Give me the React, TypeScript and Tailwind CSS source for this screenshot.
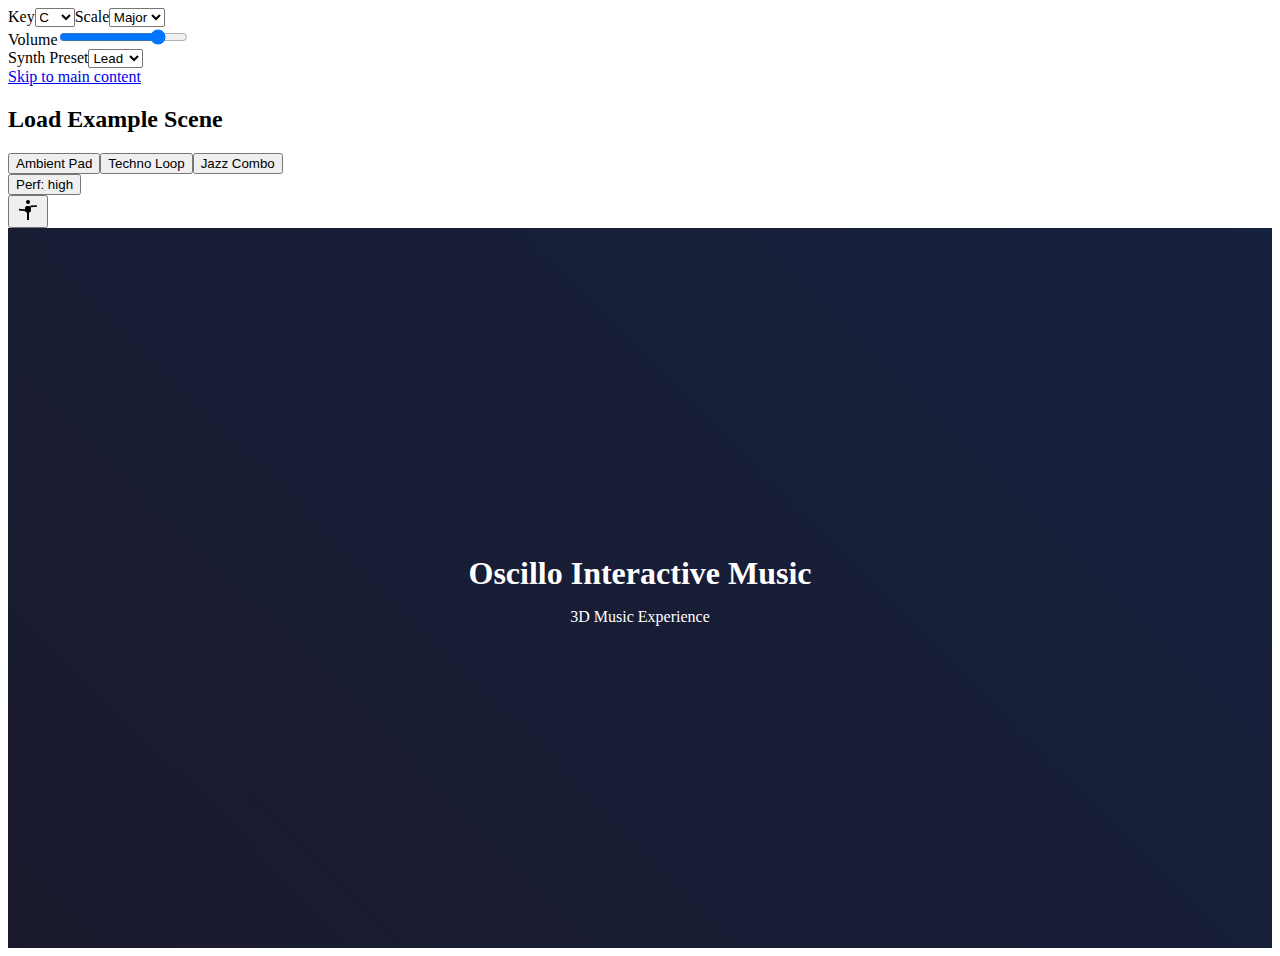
import React from "react";

const selectClass =
  "appearance-auto h-[19px] rounded-[2px] border border-[#767676] bg-white font-['Liberation_Sans',sans-serif] text-[13.333px] leading-normal text-black";
const buttonClass =
  "flex items-center justify-center rounded-[2.5px] border border-[#767676] bg-[#efefef] px-[7px] font-['Liberation_Sans',sans-serif] text-[13.333px] leading-[15px] text-black";

export default function App() {
  return (
    <div className="m-2 font-['Liberation_Serif',serif] text-base leading-[18px] text-black">
      <div className="flex h-[19px] items-start">
        <label>Key</label>
        <select className={selectClass + " w-10 -indent-[0.5px]"} defaultValue="C">
          <option>C</option>
          <option>D</option>
          <option>E</option>
        </select>
        <label>Scale</label>
        <select className={selectClass + " w-14 -indent-[0.5px]"} defaultValue="Major">
          <option>Major</option>
          <option>Minor</option>
        </select>
      </div>
      <div className="flex h-[22px] items-start">
        <label className="pt-1">Volume</label>
        <input type="range" min="0" max="100" defaultValue="80" className="m-[2px] h-4 w-[129px]" />
      </div>
      <div className="flex h-[19px] items-start">
        <label>Synth Preset</label>
        <select className={selectClass + " w-[55px]"} defaultValue="Lead">
          <option>Lead</option>
          <option>Pad</option>
          <option>Bass</option>
        </select>
      </div>
      <a href="#main" className="block text-[#0000ee] underline">
        Skip to main content
      </a>
      <h2 className="my-5 text-2xl leading-[27px] font-bold">Load Example Scene</h2>
      <div className="flex h-[21px]">
        <button className={buttonClass}>Ambient Pad</button>
        <button className={buttonClass}>Techno Loop</button>
        <button className={buttonClass}>Jazz Combo</button>
      </div>
      <div className="flex h-[21px]">
        <button className={buttonClass}>Perf: high</button>
      </div>
      <div className="flex h-[33px]">
        <button className={buttonClass + " w-10 pb-1"} aria-label="Character">
          <svg viewBox="0 0 24 24" className="block size-6 shrink-0" fill="currentColor">
            <circle cx="12" cy="4" r="2" />
            <rect x="9" y="8" width="6" height="6.500" rx="2" />
            <path d="M3 11.700l7 .6M14.500 8.400l6.500-.4" stroke="currentColor" strokeWidth="1.700" />
            <path d="M12 13v9" stroke="currentColor" strokeWidth="2" />
          </svg>
        </button>
      </div>
      <main
        id="main"
        className="flex h-[720px] flex-col items-center justify-center bg-[linear-gradient(45deg,#1a1a2e,#16213e)] pt-[5px] text-white"
      >
        <h1 className="mb-[17px] text-[32px] leading-9 font-bold">Oscillo Interactive Music</h1>
        <p>3D Music Experience</p>
      </main>
    </div>
  );
}
